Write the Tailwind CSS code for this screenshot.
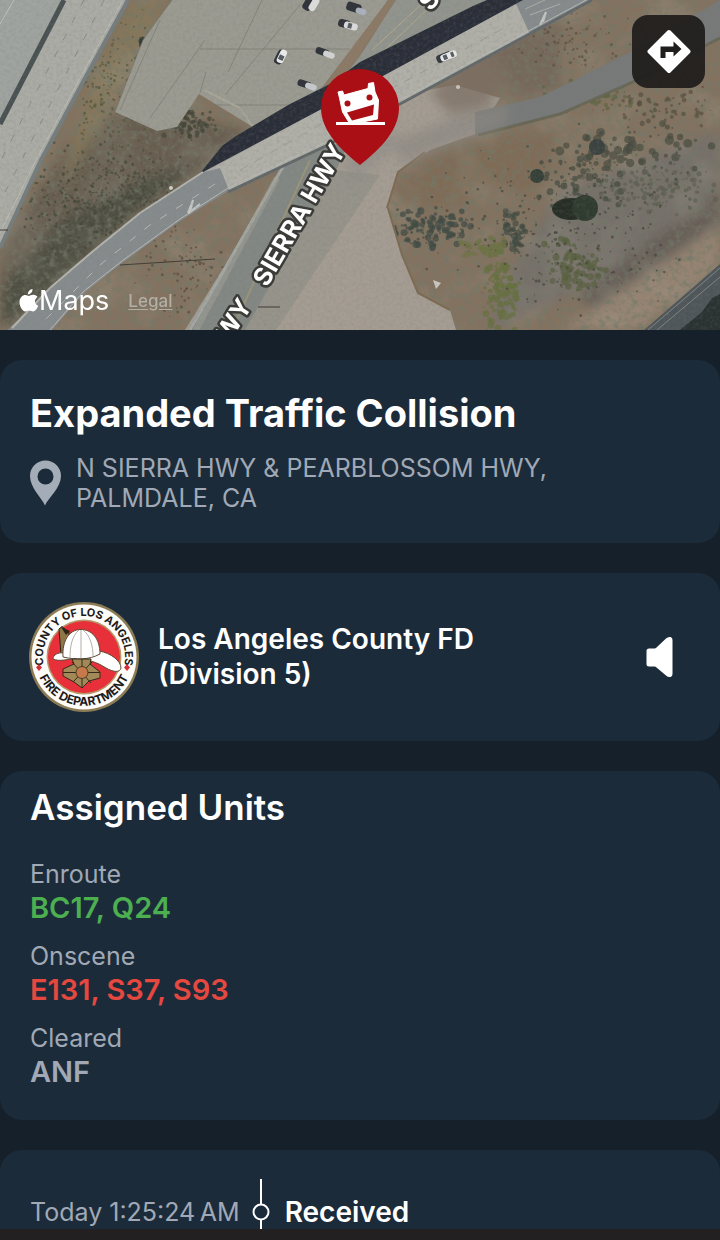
<!DOCTYPE html>
<html lang="en">
  <head>
    <meta charset="UTF-8" />
    <meta name="viewport" content="width=device-width, initial-scale=1.0" />
    <title>Expanded Traffic Collision</title>
    <script src="https://cdn.jsdelivr.net/npm/@tailwindcss/browser@4"></script>
  </head>
  <body class="bg-[#15202b] text-white font-[Inter,sans-serif]">
    <main class="flex flex-col gap-[30px] min-h-screen overflow-hidden">
      <!-- Map -->
      <section class="relative h-[330px] overflow-hidden bg-[#7d6e5d]" aria-label="Map">
        <svg
          class="w-full h-full"
          viewBox="0 0 720 330"
          preserveAspectRatio="xMidYMid slice"
        >
          <defs>
            <filter id="scrub" x="0" y="0" width="100%" height="100%">
              <feTurbulence type="fractalNoise" baseFrequency="0.16" numOctaves="4" seed="7" />
              <feColorMatrix values="0 0 0 0 0.17  0 0 0 0 0.19  0 0 0 0 0.14  2.6 0 0 0 -1.15" />
            </filter>
            <filter id="patches" x="0" y="0" width="100%" height="100%">
              <feTurbulence type="fractalNoise" baseFrequency="0.022" numOctaves="3" seed="3" />
              <feColorMatrix values="0 0 0 0 0.37  0 0 0 0 0.36  0 0 0 0 0.3  0 3 0 0 -1.35" />
            </filter>
            <filter id="grain" x="0" y="0" width="100%" height="100%">
              <feTurbulence type="fractalNoise" baseFrequency="0.3" numOctaves="3" seed="11" />
              <feColorMatrix values="0 0 0 0 0.2  0 0 0 0 0.2  0 0 0 0 0.18  1.3 0 0 0 -0.52" />
            </filter>
            <filter id="soft"><feGaussianBlur stdDeviation="6" /></filter>
            <filter id="edge"><feGaussianBlur stdDeviation="0.6" /></filter>
          </defs>

          <!-- ground -->
          <rect width="720" height="330" fill="#84725f" />
          <g filter="url(#soft)">
            <path d="M90 110L190 120 250 130 200 175 120 225 40 300 0 330V250Z" fill="#675d50" />
            <path d="M0 290L60 220 130 185 200 160 130 220 30 310 0 330Z" fill="#4f4f43" />
            <path d="M133 0L165 0 110 110 60 190 90 80Z" fill="#86775a" />
            <path d="M485 50L560 20 560 90 510 100Z" fill="#76675a" />
            <path d="M560 190L720 130V220L560 300 490 330 500 290Z" fill="#77706a" />
            <path d="M580 290L720 190V225L590 315Z" fill="#675f59" />
            <path d="M560 330L720 225V265L640 330Z" fill="#978472" />
            <path d="M390 185L470 140 560 130 540 190 400 215Z" fill="#806c56" />
          </g>
          <rect width="720" height="330" filter="url(#patches)" opacity=".25" />
          <rect width="720" height="330" filter="url(#scrub)" opacity=".75" />
          <g id="shrubs" filter="url(#edge)"></g>

          <g filter="url(#edge)">
            <!-- parking lot -->
            <path d="M172 0L143 40 115 112 157 131 177 127 199 94 253 127 320 90 350 60 388 0Z" fill="#9b9b92" />
            <path d="M172 0L143 40 115 112M200 93L206 72M262 0L228 72M200 49H350M215 105H310M120 110L160 20M150 118L205 40M225 95L300 5" fill="none" stroke="#74746c" stroke-width="1" opacity=".6" />
            <path d="M204 90L240 108 253 127" fill="none" stroke="#a8a798" stroke-width="2" />
            <path d="M388 0L320 90 338 84 398 0Z" fill="#8c7a66" />

            <!-- freeway -->
            <path d="M0 0H128L84 80 41 160 0 248Z" fill="#abaca5" />
            <path d="M0 0H62L0 122Z" fill="#a0a4a0" />
            <path d="M64 0L0 124" stroke="#4a5153" stroke-width="5" />
            <path d="M128 0L84 80 41 160 0 248" fill="none" stroke="#757d7e" stroke-width="4" />
            <path d="M123 0L79 80 36 160 0 233" fill="none" stroke="#bcbeb7" stroke-width="1" />
            <path d="M84 0L0 162M104 0L0 202" stroke="#898c87" stroke-width="1" stroke-dasharray="7 12" />
            <path d="M14 0L0 24" stroke="#c2c4bf" stroke-width="1" />

            <!-- dirt lot -->
            <path d="M400 95L455 85 500 98 478 133 430 150 398 172 387 208 402 255 418 293 450 310 456 330H185L290 160Z" fill="#a59d93" />
            <path d="M388 208L402 255 418 293 450 310M387 208L398 172 425 152" fill="none" stroke="#7d6b51" stroke-width="2" />

            <!-- Sierra Hwy -->
            <path d="M396 0H492L385 75 338 84 360 56Z" fill="#92958e" />
            <path d="M437 0L374 60M426 0L372 50" stroke="#b2a98a" stroke-width="1" />
            <path d="M287 160L350 140 262 330H188Z" fill="#838884" />
            <path d="M335 170L380 175 276 330H245Z" fill="#96948b" />
            <path d="M285 163L190 330" stroke="#a3a8a4" stroke-width="3" />
            <path d="M310 160L232 330" stroke="#9b947a" stroke-width="2" />
            <path d="M277 178L196 330" stroke="#a4a39a" stroke-width="6" opacity=".5" />

            <!-- side road -->
            <path d="M475 112L540 97 575 80 630 52 700 12 720 0V38L635 82 560 115 475 136Z" fill="#777a79" />
            <path d="M478 135L560 114 635 81 720 38" fill="none" stroke="#625f4a" stroke-width="3" opacity=".7" />

            <!-- railway in the corner -->
            <path d="M644 330L720 264V330Z" fill="#50575a" />
            <path d="M648 330L720 268M657 330L720 277" stroke="#7e8484" stroke-width="1" />
            <path d="M680 330L702 312 712 298 720 294V330Z" fill="#2c3033" />
          </g>

          <!-- worn edges where the dirt meets the roads -->
          <g filter="url(#soft)">
            <path d="M430 92L490 45 506 62 490 105 450 114Z" fill="#7b6c61" opacity=".7" />
            <path d="M395 140L475 108 510 106 505 125 400 165Z" fill="#8b8881" opacity=".7" />
            <path d="M345 160L392 130 400 145 350 185Z" fill="#8d8c87" opacity=".6" />
          </g>

          <g filter="url(#edge)">
            <!-- overpass shadow -->
            <path d="M198 176L222 146 236 136 290 104 330 84 360 62 473 6 487 0H530L385 78 320 112Z" fill="#292e37" />
            <!-- overpass -->
            <path d="M523 0L385 75 320 110 203 172 140 213 92 252 50 288 8 330H52L84 293 122 263 180 221 228 191 330 143 400 103 592 0Z" fill="#868b8d" />
            <path d="M516 4L385 75 320 110 204 172 220 168 229 190 330 143 400 103 530 34Z" fill="#b0b0a9" />
            <path d="M592 0L400 104 330 144 228 192" fill="none" stroke="#62686a" stroke-width="3" />
            <path d="M590 -2L400 100 330 140 228 188 180 219 122 261 84 291 50 330" fill="none" stroke="#b8bab5" stroke-width="1" />
            <path d="M203 172L140 213 92 252 50 288 12 328" fill="none" stroke="#b3b4ae" stroke-width="2" />
            <path d="M215 184L150 225 100 265 40 325" fill="none" stroke="#b5b8b6" stroke-width="1" stroke-dasharray="8 11" />
            <path d="M240 170L325 122 400 84 510 25" fill="none" stroke="#9c9d97" stroke-width="1" stroke-dasharray="9 8" />
            <path d="M188 213L193 200 190 212 200 204M540 25L546 12 543 22" fill="none" stroke="#c4c7c3" stroke-width="2" />
            <path d="M530 15L560 4M525 9L545 0" stroke="#aeb0ad" stroke-width="1" />

            <!-- utility lines and bare spots -->
            <path d="M120 265L215 259M258 307H280M0 230H8" stroke="#3d3b33" stroke-width="1" />
            <path d="M433 280L441 283 436 289Z" fill="#ccc9c2" />
            <circle cx="171" cy="188" r="2" fill="#d0cec6" />
            <circle cx="458" cy="87" r="2" fill="#cfcac1" />
          </g>
          <rect width="720" height="330" filter="url(#grain)" opacity=".35" />

          <!-- vehicles -->
          <g filter="url(#edge)">
            <g transform="translate(281 57) rotate(-64)"><rect x="-8" y="-5" width="15" height="8" rx="3" fill="#2f343d" /><rect x="-6" y="-3" width="14" height="7" rx="3" fill="#e9e9e7" /><rect x="-3" y="-2" width="5" height="5" fill="#555b62" /></g>
            <g transform="translate(313 5) rotate(-60)"><rect x="-8" y="-9" width="14" height="9" rx="3" fill="#30353b" /><rect x="-6" y="-3" width="14" height="7" rx="3" fill="#dadbd8" /></g>
            <g transform="translate(349 25) rotate(15)"><rect x="-11" y="-4" width="12" height="8" rx="3" fill="#30353b" /><rect x="-5" y="-3" width="14" height="7" rx="3" fill="#d8d9d8" /><rect x="-1" y="-2" width="4" height="5" fill="#555b62" /></g>
            <g transform="translate(327 54) rotate(20)"><rect x="-12" y="-4" width="14" height="7" rx="3" fill="#30353b" /><rect x="-4" y="-3" width="12" height="6" rx="3" fill="#d0d1d0" /></g>
            <g transform="translate(309 86) rotate(18)"><rect x="-12" y="-4" width="14" height="7" rx="3" fill="#30353b" /><rect x="-4" y="-3" width="12" height="6" rx="3" fill="#c4c8cb" /></g>
            <g transform="translate(357 9) rotate(18)"><rect x="-11" y="-5" width="15" height="9" rx="3" fill="#30353b" /><rect x="-1" y="-2" width="11" height="6" rx="3" fill="#a9b0bb" /></g>
            <g transform="translate(447 56) rotate(-22)"><rect x="-11" y="-4" width="16" height="8" rx="3" fill="#363b3f" /><rect x="-7" y="-3" width="17" height="7" rx="3" fill="#e8e8e5" /><rect x="-4" y="-2" width="4" height="5" fill="#555b62" /><rect x="4" y="-2" width="3" height="5" fill="#555b62" /></g>
          </g>

          <!-- street labels -->
          <g
            class="font-[Inter,sans-serif] font-bold"
            font-size="25"
            fill="#fff"
            stroke="#3b3b38"
            stroke-width="5"
            stroke-linejoin="round"
            paint-order="stroke"
          >
            <text transform="translate(267 288) rotate(-60)">SIERRA HWY</text>
            <text transform="translate(253 306) rotate(-57)" text-anchor="end">WY</text>
            <text transform="translate(431 12) rotate(-52)">S</text>
          </g>
        </svg>

        <!-- Incident pin -->
        <svg
          class="absolute left-1/2 top-[68px] -translate-x-1/2"
          width="80"
          height="98"
          viewBox="0 0 80 98"
          role="img"
          aria-label="Collision location"
        >
          <path d="M40 97C25 85 1 65 1 40A39 39 0 0 1 79 40C79 65 55 85 40 97Z" fill="#a90f14" />
          <path
            d="M18 24L22.500 23 24 27 48 20.500 48.500 15.500 53.500 14.500 55 24 58.500 32 57.500 51 32 56 29 54.500 22.500 44 19.500 30Z"
            fill="#fff"
            stroke="#fff"
            stroke-width="1"
            stroke-linejoin="round"
          />
          <path d="M27 44.500L54 36.500 53 47 32 52.500Z" fill="#a90f14" />
          <circle cx="27.500" cy="35.500" r="3" fill="#a90f14" />
          <circle cx="49.500" cy="29.500" r="3" fill="#a90f14" />
          <rect x="16" y="54" width="49" height="3" fill="#fff" />
        </svg>

        <button
          class="absolute right-[15px] top-[15px] w-[73px] h-[73px] rounded-2xl bg-[#211f1e]/95 flex items-center justify-center"
          aria-label="Directions"
        >
          <svg width="44" height="45" viewBox="0 0 44 45">
            <path
              d="M22 3L41.500 22.500 22 42 2.500 22.500Z"
              fill="#fff"
              stroke="#fff"
              stroke-width="4"
              stroke-linejoin="round"
            />
            <path d="M13.500 29V17.500H26.500V12.500L34.500 20 26.500 27.500V23H18.500V29Z" fill="#211f1e" />
          </svg>
        </button>

        <div class="absolute left-[19px] bottom-[13px] flex items-center">
          <svg width="20" height="24" viewBox="0 0 20 24" fill="#fff" aria-hidden="true">
            <path d="M13.500 0C13.800 2.800 11.500 5.400 8.900 5.300 8.600 2.700 11 .3 13.500 0Z" />
            <path d="M9.800 6.900C11 6.900 12.300 5.600 14.500 5.800 16.400 5.900 17.700 6.800 18.500 8 14.800 10.300 15.400 15.300 19.200 16.800 18.200 19.400 16.400 22.400 14.200 22.400 12.600 22.400 12.100 21.400 10.200 21.400 8.300 21.400 7.700 22.400 6.200 22.400 3.600 22.500.5 17.700.5 13.300.5 8.500 3.500 5.900 6.300 5.900 8 5.900 9 6.900 9.800 6.900Z" />
          </svg>
          <span class="text-[27px] leading-8">Maps</span>
          <a href="#" class="ml-[19px] text-[17px] leading-8 font-medium text-[#b3aea6] underline underline-offset-2">Legal</a>
        </div>
      </section>

      <!-- Incident -->
      <section class="rounded-[22px] bg-[#1c2b3a] p-[30px]">
        <h1 class="text-[38px] leading-[46px] font-bold">Expanded Traffic Collision</h1>
        <div class="mt-[17px] flex items-center gap-[14px]">
          <svg class="shrink-0" width="32" height="46" viewBox="0 0 32 46" aria-hidden="true">
            <path
              d="M15 45.500C12 38 0 28 0 16A15.500 15.500 0 0 1 31 16C31 28 18 38 15 45.500ZM15.500 8.500A8 8 0 1 0 15.500 24.500 8 8 0 1 0 15.500 8.500Z"
              fill="#a4acb8"
              fill-rule="evenodd"
            />
          </svg>
          <p class="text-[25px] leading-[30px] text-[#a0a9b5]">
            N SIERRA HWY &amp; PEARBLOSSOM HWY,<br />PALMDALE, CA
          </p>
        </div>
      </section>

      <!-- Agency -->
      <section class="rounded-[22px] bg-[#1c2b3a] p-[29px] flex items-center">
        <svg class="shrink-0" width="110" height="110" viewBox="0 0 110 110" role="img" aria-label="County of Los Angeles Fire Department">
          <defs>
            <path id="arc-top" d="M17.700 72A41 41 0 1 1 92.300 72" />
            <path id="arc-bottom" d="M7.300 66A49 49 0 0 0 102.700 66" />
          </defs>
          <circle cx="55" cy="55" r="55" fill="#8c7c55" />
          <circle cx="55" cy="55" r="52.500" fill="#fdfcf8" />
          <circle cx="55" cy="55" r="37.500" fill="#b79a6c" />
          <circle cx="55" cy="55" r="36" fill="#e8303a" />
          <g class="font-[Inter,sans-serif] font-bold" font-size="11" fill="#1c1a1a" text-anchor="middle">
            <text><textPath href="#arc-top" startOffset="50%">COUNTY OF LOS ANGELES</textPath></text>
            <text font-size="12"><textPath href="#arc-bottom" startOffset="50%">FIRE DEPARTMENT</textPath></text>
          </g>
          <path d="M10 62L13 65.500 10 69 7 65.500ZM98 62L101 65.500 98 69 95 65.500Z" fill="#d8303a" />
          <!-- helmet -->
          <path d="M30 27L33 24.500 40 31 38 56 32 53Z" fill="#8d7648" stroke="#2c2418" stroke-width="1" />
          <path d="M32 25L41 29 37 33Z" fill="#2c2418" />
          <path d="M24 57C24 53 29 50 35 51L70 49C82 51 92 59 92 66 91 71 84 70 77 66 68 60 58 57 46 57 37 57 31 60 24 57Z" fill="#fff" stroke="#5e4a35" stroke-width="1" />
          <path d="M34 55C33 39 40 28 51 27.500 63 27 71 37 71 52 60 58 47 58 34 55Z" fill="#fff" stroke="#5e4a35" stroke-width="1" />
          <path d="M50 28C43 34 41 44 41 56M52 28V57M54 28C61 33 64 44 64 54" fill="none" stroke="#b5aea4" stroke-width="1" />
          <!-- badge -->
          <path d="M43 57H62L61 62 71 70V76L60 79 53 86 45 80 34 74V67L45 62Z" fill="#a28a58" stroke="#352a1a" stroke-width="1" />
          <path d="M34 70.500H71M53 57V86M43 60L62 81M63 60L44 80" stroke="#352a1a" stroke-width="1" />
          <circle cx="53" cy="70.500" r="6" fill="#c67a4c" stroke="#4d3c22" stroke-width="1" />
        </svg>
        <h2 class="ml-[19px] flex-1 text-[28px] leading-[35px] font-semibold">
          Los Angeles County FD<br />(Division 5)
        </h2>
        <button class="mr-[18px]" aria-label="Play audio">
          <svg width="27" height="42" viewBox="0 0 27 42">
            <path
              d="M3 12.500H8.500Q9.500 12.500 10.500 11.500L20 2.500Q22 .5 24.500 1 26.500 1.500 26.500 4V38Q26.500 40.500 24.500 41 22 41.500 20 39.500L10.500 31.500Q9.500 30.500 8.500 30.500H3Q.5 30.500.5 28V15Q.5 12.500 3 12.500Z"
              fill="#fff"
            />
          </svg>
        </button>
      </section>

      <!-- Units -->
      <section class="rounded-[22px] bg-[#1c2b3a] px-[30px] pt-[14px] pb-[31px]">
        <h2 class="text-[35px] leading-[44px] font-semibold">Assigned Units</h2>
        <dl class="mt-[28px] flex flex-col gap-[14px] text-[25px] leading-[34px]">
          <div>
            <dt class="text-[#a0a9b5]">Enroute</dt>
            <dd class="text-[29px] font-semibold text-[#4caf50]">BC17, Q24</dd>
          </div>
          <div>
            <dt class="text-[#a0a9b5]">Onscene</dt>
            <dd class="text-[29px] font-semibold text-[#e5483f]">E131, S37, S93</dd>
          </div>
          <div>
            <dt class="text-[#a0a9b5]">Cleared</dt>
            <dd class="text-[29px] font-semibold text-[#a0a9b5]">ANF</dd>
          </div>
        </dl>
      </section>

      <!-- Timeline, running on under the bottom bar -->
      <section class="rounded-t-[22px] bg-[#1c2b3a] pt-[29px] px-[30px]">
        <div class="flex items-end">
          <time class="text-[25px] leading-[34px] text-[#a0a9b5]">Today 1:25:24&thinsp;AM</time>
          <svg class="ml-3 shrink-0" width="18" height="50" viewBox="0 0 18 50" fill="none" stroke="#fff" stroke-width="2" aria-hidden="true">
            <path d="M9 0V25M9 41V50" />
            <circle cx="9" cy="33" r="7.500" />
          </svg>
          <strong class="ml-[15px] text-[28px] leading-[34px] font-semibold">Received</strong>
        </div>
        <div class="-mx-[30px] h-[11px] bg-[#222021]"></div>
      </section>
    </main>

    <script>
      // [center x, center y, spread x, spread y, count, max radius, color]
      const clusters = [
        [430, 228, 48, 24, 130, 3, "#3f4a44"],
        [515, 235, 14, 26, 60, 3, "#414b43"],
        [500, 290, 20, 44, 130, 3, "#66713f"],
        [482, 248, 26, 12, 50, 3, "#6d7344"],
        [575, 265, 36, 28, 110, 3, "#59613f"],
        [630, 150, 90, 30, 80, 4, "#484c40"],
        [580, 180, 60, 30, 60, 3, "#454a3e"],
        [650, 190, 80, 30, 160, 2, "#5e6052"],
        [600, 95, 60, 20, 80, 2, "#5f6541"],
        [570, 40, 70, 34, 90, 1, "#57503f"],
        [660, 110, 60, 30, 60, 2, "#57503f"],
        [560, 230, 150, 90, 260, 1, "#46453a"],
        [100, 200, 90, 60, 420, 1, "#45473b"],
        [110, 90, 40, 90, 180, 1, "#56573c"],
        [190, 125, 30, 18, 80, 2, "#444639"],
        [190, 275, 60, 50, 90, 1, "#584c3a"],
        [142, 43, 5, 7, 12, 3, "#353e35"],
      ];

      let seed = 42;
      function random() {
        seed = (seed * 16807) % 2147483647;
        return seed / 2147483647;
      }

      function renderShrubs() {
        let out = "";
        clusters.forEach(([cx, cy, sx, sy, count, max, color]) => {
          for (let i = 0; i < count; i++) {
            const x = cx + (random() + random() - 1) * sx;
            const y = cy + (random() + random() - 1) * sy;
            const r = 0.6 + random() * max;
            out += `<circle cx="${x}" cy="${y}" r="${r}" fill="${color}" opacity=".7"/>`;
          }
        });
        out += `<ellipse cx="571" cy="209" rx="19" ry="11" fill="#272e28"/>`;
        out += `<circle cx="585" cy="208" r="13" fill="#2f3b2d"/>`;
        out += `<circle cx="597" cy="147" r="8" fill="#3b4340"/>`;
        out += `<circle cx="537" cy="176" r="7" fill="#353f39"/>`;
        document.getElementById("shrubs").innerHTML = out;
      }

      renderShrubs();
    </script>
  </body>
</html>
